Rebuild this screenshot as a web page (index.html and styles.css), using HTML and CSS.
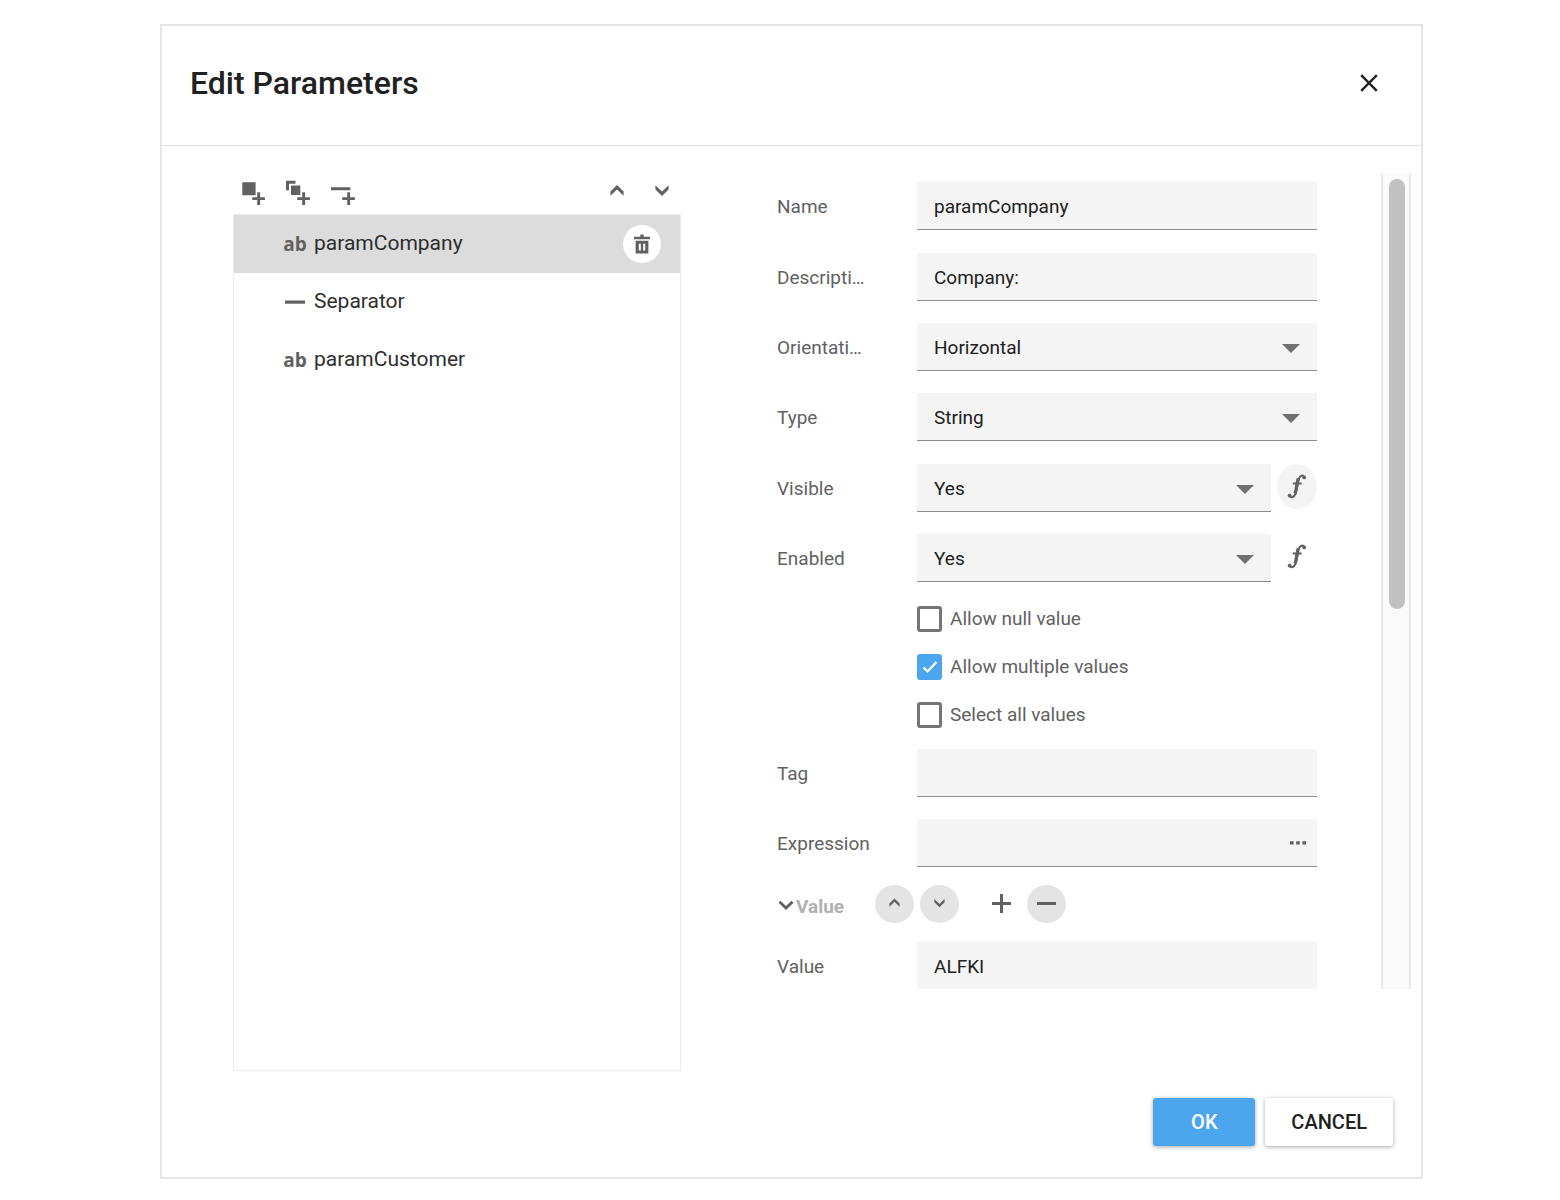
FILE: index.html
```html
<!DOCTYPE html>
<html lang="en">
<head>
<meta charset="utf-8">
<title>Edit Parameters</title>
<link rel="stylesheet" href="styles.css">
</head>
<body>
<main class="dialog" role="dialog" aria-labelledby="dialog-title">
  <header class="dialog-header">
    <h1 class="dialog-title" id="dialog-title">Edit Parameters</h1>
    <button class="icon-button close" type="button" aria-label="Close">
      <svg width="18" height="18" viewBox="0 0 18 18"><path d="M1.2 1.2 16.8 16.8M16.8 1.2 1.2 16.8" fill="none" stroke="#212121" stroke-width="2.4"/></svg>
    </button>
  </header>

  <div class="dialog-body">
    <section class="list-pane">
      <div class="toolbar">
        <button class="icon-button" type="button" aria-label="Add parameter">
          <svg width="26" height="26" viewBox="0 0 26 26"><path d="M2.3 2.3h13.3v13H2.3zM17.2 12.3h2.9v5h4.8v2.8h-4.8v4.8h-2.9v-4.8h-5v-2.8h5z"/></svg>
        </button>
        <button class="icon-button" type="button" aria-label="Add range parameter">
          <svg width="26" height="26" viewBox="0 0 26 26"><path d="M1 .7h9.5v3H4v6.6H1zM6 5.6h9.3v9.5H6zM17.2 12.3h2.9v5h4.8v2.8h-4.8v4.8h-2.9v-4.8h-5v-2.8h5z"/></svg>
        </button>
        <button class="icon-button" type="button" aria-label="Add separator">
          <svg width="26" height="26" viewBox="0 0 26 26"><path d="M1 7.2h19.4v3.1H1zM17.2 12.3h2.9v5h4.8v2.8h-4.8v4.8h-2.9v-4.8h-5v-2.8h5z"/></svg>
        </button>
        <span class="spacer"></span>
        <button class="icon-button" type="button" aria-label="Move up">
          <svg width="14" height="11" viewBox="0 0 14 11"><path d="M7 0l6.6 6.5v4.3L7 4.4.4 10.8V6.5z"/></svg>
        </button>
        <button class="icon-button" type="button" aria-label="Move down">
          <svg width="14" height="11" viewBox="0 0 14 11"><path d="M7 11l6.6-6.5V.2L7 6.6.4.2v4.3z"/></svg>
        </button>
      </div>
      <ul class="param-list">
        <li class="param selected">
          <span class="param-icon">ab</span>
          <span class="param-name">paramCompany</span>
          <button class="delete" type="button" aria-label="Delete paramCompany">
            <svg width="16" height="20" viewBox="0 0 16 20"><path fill-rule="evenodd" d="M6.3.5h3.4v2.3H16v2.5H0V2.8h6.3zM1.6 6.8h12.8v12.7H1.6zM4.8 9.7v6.8h2V9.7zM9.2 9.7v6.8h2V9.7z"/></svg>
          </button>
        </li>
        <li class="param">
          <span class="param-icon"><svg width="20" height="4" viewBox="0 0 20 4"><path d="M0 .5h20v3.2H0z"/></svg></span>
          <span class="param-name">Separator</span>
        </li>
        <li class="param">
          <span class="param-icon">ab</span>
          <span class="param-name">paramCustomer</span>
        </li>
      </ul>
    </section>

    <section class="form-pane">
      <form class="form">
        <div class="group">
          <div class="row">
            <label class="label" for="name">Name</label>
            <input class="field" id="name" type="text" value="paramCompany">
          </div>
        </div>
        <div class="group">
          <div class="row">
            <label class="label" for="description">Description</label>
            <input class="field" id="description" type="text" value="Company:">
          </div>
          <div class="row">
            <label class="label" for="orientation">Orientation</label>
            <span class="select"><select class="field" id="orientation"><option>Horizontal</option><option>Vertical</option></select></span>
          </div>
          <div class="row">
            <label class="label" for="type">Type</label>
            <span class="select"><select class="field" id="type"><option>String</option><option>Number</option></select></span>
          </div>
        </div>
        <div class="group">
          <div class="row">
            <label class="label" for="visible">Visible</label>
            <span class="select"><select class="field" id="visible"><option>Yes</option><option>No</option></select></span>
            <button class="formula active" type="button" aria-label="Visible formula">
              <svg width="20" height="25" viewBox="0 0 20 25"><use href="#formula-icon"/></svg>
            </button>
          </div>
          <div class="row">
            <label class="label" for="enabled">Enabled</label>
            <span class="select"><select class="field" id="enabled"><option>Yes</option><option>No</option></select></span>
            <button class="formula" type="button" aria-label="Enabled formula">
              <svg width="20" height="25" viewBox="0 0 20 25">
                <g id="formula-icon">
                  <path d="M17.500 3.200C16 .7 13.200 1.200 12 4.500 10.500 9 10.300 15.500 8.600 19.600 7.200 23.200 4 24.400 2.400 21.800" fill="none" stroke="#616161" stroke-width="2"/>
                  <path d="M11.200 4.500C9.800 9 9.600 15 8 19.500" fill="none" stroke="#616161" stroke-width="3.200"/>
                  <path d="M5.800 8.500h8.800v2H5.800z"/>
                  <circle cx="17.200" cy="3.400" r="1.900"/>
                  <circle cx="2.600" cy="21.600" r="1.900"/>
                </g>
              </svg>
            </button>
          </div>
        </div>
        <div class="checks">
          <label class="check"><input type="checkbox">Allow null value</label>
          <label class="check"><input type="checkbox" checked>Allow multiple values</label>
          <label class="check"><input type="checkbox">Select all values</label>
        </div>
        <div class="group">
          <div class="row">
            <label class="label" for="tag">Tag</label>
            <input class="field" id="tag" type="text">
          </div>
          <div class="row">
            <label class="label" for="expression">Expression</label>
            <span class="with-more">
              <input class="field" id="expression" type="text">
              <button class="more" type="button" aria-label="Edit expression">
                <svg width="16" height="4" viewBox="0 0 16 4"><path d="M0 .2h3.6v3.4H0zM6.2.2h3.6v3.4H6.2zM12.4.2H16v3.4h-3.6z"/></svg>
              </button>
            </span>
          </div>
        </div>
        <div class="value-bar">
          <button class="collapse" type="button">
            <svg width="16" height="14" viewBox="0 0 16 14"><path d="M1.500 1.700 8 8.100l6.500-6.400" fill="none" stroke="#616161" stroke-width="2.8"/></svg>
            Value
          </button>
          <div class="value-actions">
            <button class="round filled" type="button" aria-label="Move value up">
              <svg width="11" height="12" viewBox="0 0 11 12"><path d="M5.500 .6l5.100 5v3.200l-5.100-5-5.100 5V5.600z"/></svg>
            </button>
            <button class="round filled" type="button" aria-label="Move value down">
              <svg width="11" height="12" viewBox="0 0 11 12"><path d="M5.500 9.200l5.100-5V1l-5.100 5-5.100-5v3.200z"/></svg>
            </button>
          </div>
          <div class="value-actions">
            <button class="round" type="button" aria-label="Add value">
              <svg width="19" height="20" viewBox="0 0 19 20"><path d="M8 0h3v8h8v3h-8v8H8v-8H0V8h8z"/></svg>
            </button>
            <button class="round filled" type="button" aria-label="Remove value">
              <svg width="19" height="20" viewBox="0 0 19 20"><path d="M0 8h19v3H0z"/></svg>
            </button>
          </div>
        </div>
        <div class="row">
          <label class="label" for="value">Value</label>
          <input class="field" id="value" type="text" value="ALFKI">
        </div>
      </form>
      <div class="track"><div class="thumb"></div></div>
    </section>
  </div>

  <footer class="dialog-footer">
    <button class="button primary" type="button">OK</button>
    <button class="button" type="button">CANCEL</button>
  </footer>
</main>
</body>
</html>
```
FILE: styles.css
```css
* { box-sizing: border-box; }

body {
  margin: 0;
  padding: 24px 137px 21px 160px;
  background: #fff;
  color: #212121;
  font: 400 19px/24px Roboto, sans-serif;
}

button, input, select { font: inherit; color: inherit; }

button {
  display: flex;
  align-items: center;
  justify-content: center;
  padding: 0;
  border: 0;
  background: none;
  cursor: pointer;
}

svg { display: block; fill: #616161; }

.dialog {
  display: flex;
  flex-direction: column;
  height: calc(100vh - 45px);
  border: 2px solid #e5e5e5;
}

.dialog-header {
  display: flex;
  align-items: center;
  justify-content: space-between;
  padding: 37px 32px 42px 28px;
  border-bottom: 1px solid #e0e0e0;
}

.dialog-title {
  margin: 0;
  font-size: 32px;
  line-height: 40px;
  font-weight: 500;
}

.icon-button { width: 40px; height: 40px; }

.dialog-body {
  flex: 1;
  min-height: 0;
  display: grid;
  grid-template-columns: minmax(0, 448fr) minmax(0, 634fr);
  gap: 96px;
  padding: 27px 10px 0 71px;
}

/* Parameter list */
.list-pane { display: flex; flex-direction: column; min-height: 0; }

.toolbar { display: flex; gap: 5px; margin-right: -1px; padding-bottom: 1px; }

.spacer { flex: 1; }

.toolbar .spacer ~ .icon-button { height: 35px; }

.param-list {
  flex: 1;
  margin: 0;
  padding: 0;
  border: 1px solid #ebebeb;
  list-style: none;
  font-size: 21px;
}

.param {
  display: flex;
  align-items: center;
  height: 58px;
  padding: 0 19px 0 49px;
}

.selected { background: #dcdcdc; }

.param-icon {
  display: flex;
  justify-content: center;
  width: 24px;
  margin-right: 7px;
  color: #616161;
  font: 700 19px/24px "Open Sans", sans-serif;
}

.param-name { flex: 1; padding-bottom: 2px; color: #2e2e2e; }

.delete {
  width: 38px;
  height: 38px;
  border-radius: 50%;
  background: #fff;
}

/* Form */
.form-pane {
  display: flex;
  gap: 64px;
  min-height: 0;
  padding-bottom: 82px;
}

.form {
  flex: 1;
  min-width: 0;
  padding: 9px 0;
  overflow-y: auto;
  scrollbar-width: none;
}

.group { display: flex; flex-direction: column; gap: 22px; }

.group + .group { margin-top: 23px; }

.row { display: flex; align-items: flex-start; }

.label {
  flex: none;
  width: 93px;
  margin-right: 47px;
  padding-top: 2px;
  overflow: hidden;
  color: #616161;
  line-height: 46px;
  white-space: nowrap;
  text-overflow: ellipsis;
}

.field {
  flex: 1;
  min-width: 0;
  width: 100%;
  height: 48px;
  padding: 2px 17px 0;
  border: 0;
  border-bottom: 1px solid #8c8c8c;
  border-radius: 0;
  outline: 0;
  background: #f4f4f4;
  appearance: none;
}

.select, .with-more { position: relative; flex: 1; display: flex; min-width: 0; }

.select::after {
  content: "";
  position: absolute;
  top: 21px;
  right: 17px;
  border: 9px solid transparent;
  border-top-color: #707070;
  border-bottom: 0;
  pointer-events: none;
}

.more {
  position: absolute;
  top: 4px;
  right: 0;
  width: 38px;
  height: 40px;
}

.formula {
  width: 40px;
  height: 45px;
  margin-left: 6px;
  border-radius: 50%;
}

.formula.active { background: #f4f4f4; }

.checks { padding: 13px 0 10px 140px; }

.check {
  display: flex;
  align-items: center;
  gap: 8px;
  height: 48px;
  color: #616161;
}

.check input {
  width: 25px;
  height: 26px;
  margin: 0;
  border: 3px solid #757575;
  border-radius: 3px;
  appearance: none;
}

.check input:checked {
  border: 0;
  background: #4ba6ee url("data:image/svg+xml,%3Csvg xmlns='http://www.w3.org/2000/svg' width='25' height='26' viewBox='0 0 25 26'%3E%3Cpath d='M6.500 13.500l4 4L19.500 8' fill='none' stroke='white' stroke-width='2.2'/%3E%3C/svg%3E") center no-repeat;
}

.value-bar { display: flex; gap: 23px; padding: 18px 0 19px; }

.collapse {
  justify-content: flex-start;
  gap: 2px;
  width: 75px;
  height: 43px;
  margin-bottom: -5px;
  padding-left: 1px;
  color: #b0b0b0;
  font-weight: 700;
}

.value-actions { display: flex; gap: 6px; }

.round { width: 39px; height: 38px; border-radius: 50%; }

.filled { background: #e4e4e4; }

.track {
  width: 30px;
  padding: 6px;
  border: solid #ebebeb;
  border-width: 0 2px;
  background: #fafafa;
}

.thumb {
  width: 16px;
  height: 53.5%;
  border-radius: 8px;
  background: #c1c1c1;
}

/* Footer */
.dialog-footer {
  display: flex;
  justify-content: flex-end;
  gap: 10px;
  padding: 27px 28px 31px;
}

.button {
  min-width: 102px;
  height: 48px;
  padding: 0 26px;
  border-radius: 3px;
  background: #fff;
  box-shadow: 0 1px 4px rgba(0, 0, 0, .35);
  font-size: 20px;
  font-weight: 500;
}

.primary { background: #4ba6ee; color: #fff; }
```
